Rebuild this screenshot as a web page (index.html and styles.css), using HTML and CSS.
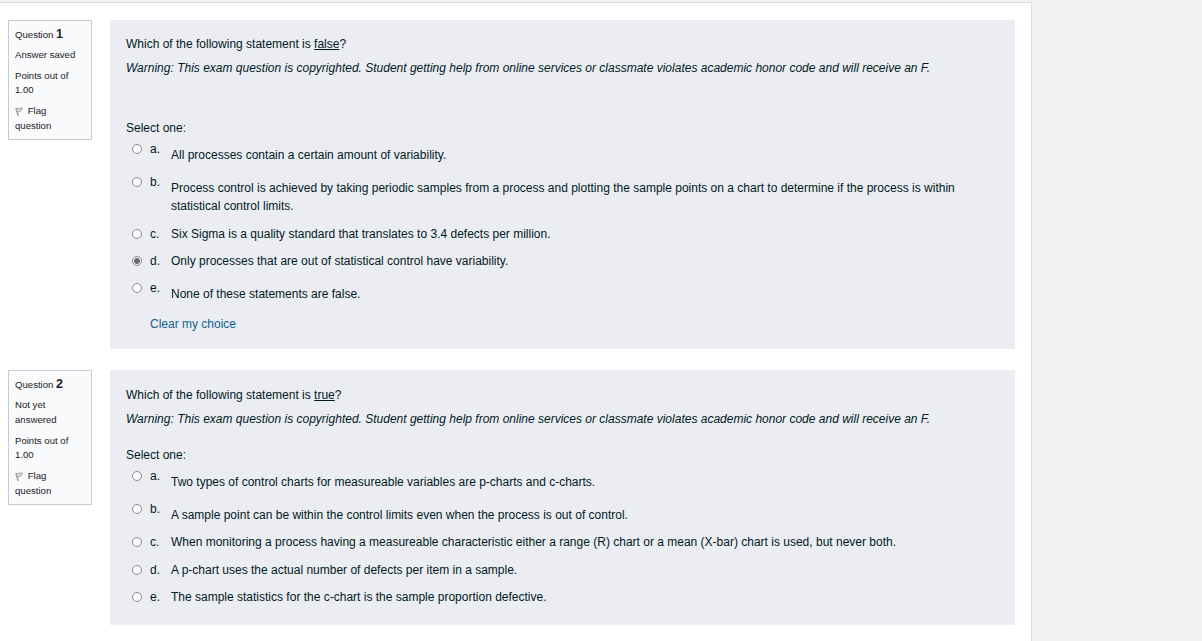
FILE: index.html
```html
<!DOCTYPE html>
<html lang="en">
<head>
    <meta charset="UTF-8">
    <meta name="viewport" content="width=device-width, initial-scale=1.0">
    <title>Exam</title>
    <link rel="stylesheet" href="styles.css">
</head>
<body>
    <main class="page">
        <section class="question first">
            <aside class="info">
                <h3>Question <span>1</span></h3>
                <div class="state">Answer saved</div>
                <div class="grade">Points out of 1.00</div>
                <div class="flag">
                    <svg width="9" height="11" viewBox="0 0 9 11"><path d="M1 2.5L3.3 10" fill="none" stroke="#9a9c9b" stroke-width="1.4"/><path d="M1 2.5L7.5 2L6 4.8L2.2 6Z" fill="#dcdfdd" stroke="#9a9c9b" stroke-width=".9"/></svg>
                    Flag question
                </div>
            </aside>
            <div class="content">
                <p>Which of the following statement is <u>false</u>?</p>
                <p class="warning">Warning: This exam question is copyrighted. Student getting help from online services or classmate violates academic honor code and will receive an F.</p>
                <div class="prompt">Select one:</div>
                <div class="answers">
                    <label class="answer spaced"><input type="radio" name="q1"><span class="letter">a.</span><span class="text">All processes contain a certain amount of variability.</span></label>
                    <label class="answer spaced"><input type="radio" name="q1"><span class="letter">b.</span><span class="text">Process control is achieved by taking periodic samples from a process and plotting the sample points on a chart to determine if the process is within statistical control limits.</span></label>
                    <label class="answer"><input type="radio" name="q1"><span class="letter">c.</span><span class="text">Six Sigma is a quality standard that translates to 3.4 defects per million.</span></label>
                    <label class="answer"><input type="radio" name="q1" checked><span class="letter">d.</span><span class="text">Only processes that are out of statistical control have variability.</span></label>
                    <label class="answer spaced"><input type="radio" name="q1"><span class="letter">e.</span><span class="text">None of these statements are false.</span></label>
                </div>
                <a class="clear" href="#">Clear my choice</a>
            </div>
        </section>
        <section class="question second">
            <aside class="info">
                <h3>Question <span>2</span></h3>
                <div class="state">Not yet answered</div>
                <div class="grade">Points out of 1.00</div>
                <div class="flag">
                    <svg width="9" height="11" viewBox="0 0 9 11"><path d="M1 2.5L3.3 10" fill="none" stroke="#9a9c9b" stroke-width="1.4"/><path d="M1 2.5L7.5 2L6 4.8L2.2 6Z" fill="#dcdfdd" stroke="#9a9c9b" stroke-width=".9"/></svg>
                    Flag question
                </div>
            </aside>
            <div class="content">
                <p>Which of the following statement is <u>true</u>?</p>
                <p class="warning">Warning: This exam question is copyrighted. Student getting help from online services or classmate violates academic honor code and will receive an F.</p>
                <div class="prompt">Select one:</div>
                <div class="answers">
                    <label class="answer spaced"><input type="radio" name="q2"><span class="letter">a.</span><span class="text">Two types of control charts for measureable variables are p-charts and c-charts.</span></label>
                    <label class="answer spaced"><input type="radio" name="q2"><span class="letter">b.</span><span class="text">A sample point can be within the control limits even when the process is out of control.</span></label>
                    <label class="answer"><input type="radio" name="q2"><span class="letter">c.</span><span class="text">When monitoring a process having a measureable characteristic either a range (R) chart or a mean (X-bar) chart is used, but never both.</span></label>
                    <label class="answer"><input type="radio" name="q2"><span class="letter">d.</span><span class="text">A p-chart uses the actual number of defects per item in a sample.</span></label>
                    <label class="answer"><input type="radio" name="q2"><span class="letter">e.</span><span class="text">The sample statistics for the c-chart is the sample proportion defective.</span></label>
                </div>
            </div>
        </section>
    </main>
</body>
</html>
```
FILE: styles.css
```css
* {
    box-sizing: border-box;
}
body {
    margin: 0;
    padding-top: 2px;
    height: 641px;
    overflow: hidden;
    background: #f1f1f1;
    color: #001a1e;
    font-family: "Liberation Sans", Arial, sans-serif;
    font-size: 12px;
    line-height: 18px;
}
.page {
    width: 1032px;
    height: 639px;
    padding: 17px 16px 0 8px;
    background: #fff;
    border-top: 1px solid #ddd;
    border-right: 1px solid #ddd;
}
.question {
    display: flex;
    align-items: flex-start;
    gap: 18px;
}
.first {
    margin-bottom: 21px;
}
.info {
    width: 84px;
    height: 120px;
    padding: 6px 6px 0;
    background: #f8fafc;
    border: 1px solid #c4cdd6;
    color: #1d2125;
    font-size: 9.6px;
    line-height: 15px;
}
.second .info {
    height: 135px;
}
.info h3 {
    margin: 0 0 5px;
    font-size: 9.6px;
    font-weight: normal;
    line-height: 15px;
}
.info h3 span {
    font-size: 12.5px;
    font-weight: bold;
}
.state {
    margin-bottom: 7px;
}
.grade {
    margin-bottom: 6px;
    line-height: 14px;
}
.flag svg {
    margin-right: 1px;
    vertical-align: -3px;
}
.content {
    width: 905px;
    height: 329px;
    padding: 15px 16px 0;
    background: #ecedf3;
}
.second .content {
    height: 255px;
    padding-top: 16px;
}
.content p {
    margin: 0 0 6px;
}
.warning {
    font-style: italic;
    white-space: nowrap;
}
.prompt {
    margin-top: 42px;
}
.second .prompt {
    margin-top: 18px;
}
.answers {
    padding: 3px 0 0 6px;
}
.answer {
    display: flex;
    align-items: flex-start;
    padding-bottom: 9.3px;
}
.second .answer.spaced {
    padding-bottom: 9px;
}
.second .answer {
    padding-bottom: 9.5px;
}
.answer input {
    appearance: none;
    width: 10px;
    height: 10px;
    margin: 4px 8px 0 0;
    background: #fff;
    border: 1px solid #8a8a8a;
    border-radius: 50%;
}
.answer input:checked {
    background: radial-gradient(circle, #6b6b6b 2.6px, #f4f4f4 3.3px);
}
.letter {
    width: 21px;
}
.text {
    flex: 1;
}
.spaced .text {
    padding-top: 6px;
}
.clear {
    display: block;
    margin: 3px 0 0 24px;
    color: #0f6292;
    text-decoration: none;
}
```
